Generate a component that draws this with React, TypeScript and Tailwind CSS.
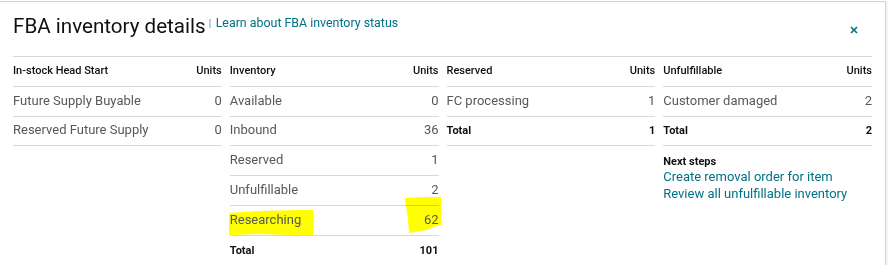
import React from 'react';

type Row = { label: string; units: string; total?: boolean; mark?: boolean };

const columns: { title: string; rows: Row[] }[] = [
  {
    title: 'In-stock Head Start',
    rows: [
      { label: 'Future Supply Buyable', units: '0' },
      { label: 'Reserved Future Supply', units: '0' },
    ],
  },
  {
    title: 'Inventory',
    rows: [
      { label: 'Available', units: '0' },
      { label: 'Inbound', units: '36' },
      { label: 'Reserved', units: '1' },
      { label: 'Unfulfillable', units: '2' },
      { label: 'Researching', units: '62', mark: true },
      { label: 'Total', units: '101', total: true },
    ],
  },
  {
    title: 'Reserved',
    rows: [
      { label: 'FC processing', units: '1' },
      { label: 'Total', units: '1', total: true },
    ],
  },
  {
    title: 'Unfulfillable',
    rows: [
      { label: 'Customer damaged', units: '2' },
      { label: 'Total', units: '2', total: true },
    ],
  },
];

// marker scribbles drawn over the Researching row
const Highlight: React.FC = () => (
  <svg
    className="absolute left-[-1px] top-[-11px] pointer-events-none mix-blend-multiply"
    width="215"
    height="44"
    viewBox="0 0 215 44"
  >
    <path d="M0 18 L30 16 L70 15 L84 15 L85 24 L84 40 L60 40 L30 39 L4 40 L0 40 Z" fill="#ffff00" />
    <path d="M176 3 L195 2 L212 2 L212 30 L206 31 L198 35 L186 37 L180 38 L179 24 L177 12 Z" fill="#ffff00" />
  </svg>
);

const Column: React.FC<{ title: string; rows: Row[]; children?: React.ReactNode }> = ({ title, rows, children }) => (
  <div className="flex flex-col">
    <div className="h-[30px] border-b border-[#d5d9d9] flex items-center justify-between text-[11px] font-medium text-[#0f1111]">
      <span>{title}</span>
      <span>Units</span>
    </div>
    {rows.map((r, i) => {
      const h = i === 1 ? 'h-[29px]' : 'h-[30px]';
      let cls = 'relative flex items-center justify-between ' + h;
      if (r.total) {
        cls += ' text-[11px] font-bold text-[#0f1111]';
        if (rows.length < 4) cls += ' border-b border-[#d5d9d9]';
      } else {
        cls += ' pb-[2px] border-b border-[#d5d9d9] text-[13px] text-[#565959]';
      }
      return (
        <div key={r.label + i} className={cls}>
          {r.mark && <Highlight />}
          <span className="relative">{r.label}</span>
          <span className="relative">{r.units}</span>
        </div>
      );
    })}
    {children}
  </div>
);

export default function App() {
  return (
    <div className="w-[888px] h-[265px] bg-[#f6f6f6] overflow-hidden" style={{ fontFamily: 'Roboto, "Noto Sans", sans-serif' }}>
      <div className="h-[1px] bg-white" />
      <div className="w-[886px] h-[264px] bg-white border-t border-r border-[#d0d3d3]">
        <div className="ml-[13px] w-[859px] h-[55px] border-b border-[#d5d9d9] flex items-start justify-between">
          <div className="flex items-start pt-[12px]">
            <h1 className="text-[20.6px] leading-[25px] text-[#0f1111]">FBA inventory details</h1>
            <span className="ml-[3px] mt-[5px] w-[2px] h-[9px] bg-[#b9d3d8]" />
            <a className="ml-[5px] mt-[1px] text-[12.4px] leading-[16px] text-[#007185]">Learn about FBA inventory status</a>
          </div>
          <button className="mt-[24px] mr-[14px] w-[8px] h-[8px] flex items-center justify-center">
            <svg width="8" height="8" viewBox="0 0 8 8">
              <path d="M1 1 L7 7 M7 1 L1 7" stroke="#007185" strokeWidth="1.6" />
            </svg>
          </button>
        </div>
        <div className="ml-[13px] w-[859px] grid grid-cols-4 gap-x-2 items-start">
          {columns.map((c) => (
            <Column key={c.title} title={c.title} rows={c.rows}>
              {c.title === 'Unfulfillable' && (
                <div className="pt-[9px] flex flex-col">
                  <span className="text-[11px] leading-[14px] font-bold text-[#0f1111]">Next steps</span>
                  <a className="mt-[-1px] text-[13px] leading-[17px] text-[#007185]">Create removal order for item</a>
                  <a className="text-[13px] leading-[17px] text-[#007185]">Review all unfulfillable inventory</a>
                </div>
              )}
            </Column>
          ))}
        </div>
      </div>
    </div>
  );
}
